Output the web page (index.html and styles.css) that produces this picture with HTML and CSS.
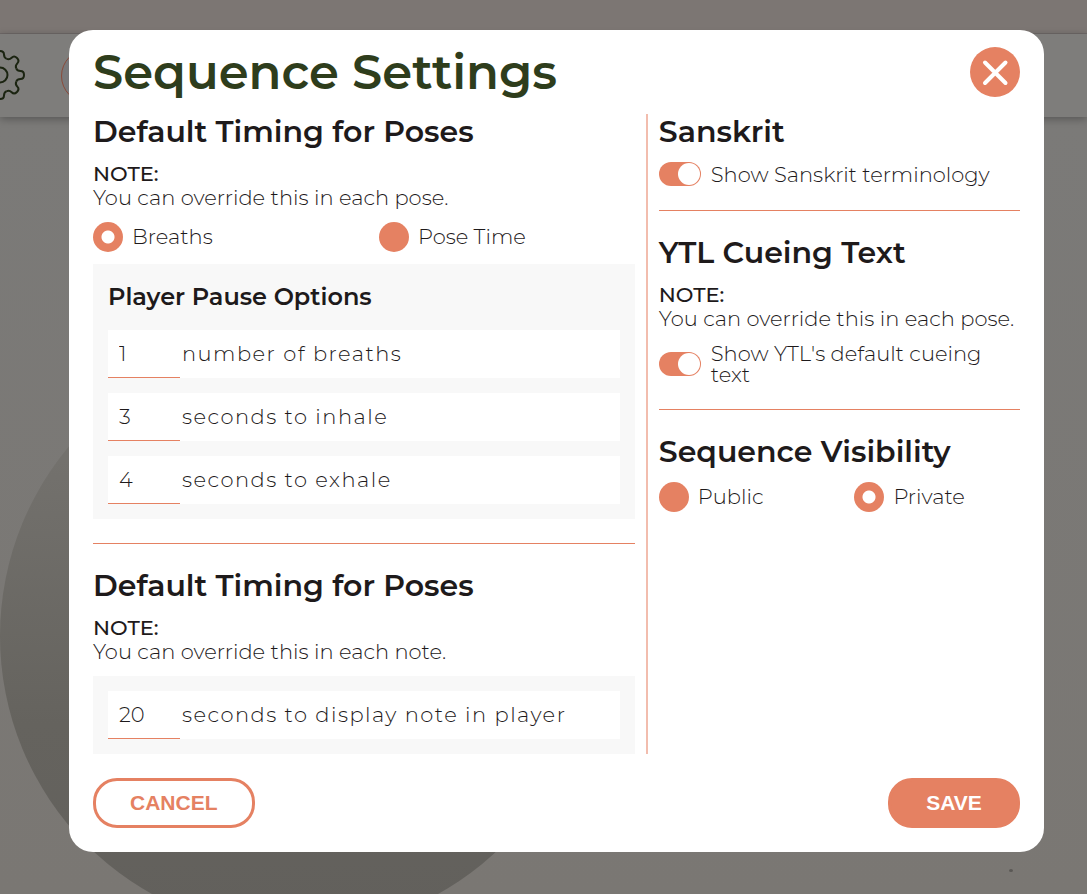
FILE: index.html
```html
<!DOCTYPE html>
<html lang="en">
<head>
<meta charset="utf-8">
<meta name="viewport" content="width=device-width, initial-scale=1">
<title>Sequence Settings</title>
<link rel="stylesheet" href="styles.css">
</head>
<body>
<div class="page" aria-hidden="true">
  <div class="topbar"></div>
  <div class="toolbar">
    <svg class="gear" viewBox="-25 -25 52 52" fill="none">
      <defs><path id="tooth" d="M16.2-6.7C17-4.8 18.5-4 20.5-4 23-4 24-3 24 0 24 3 23 4 20.5 4 18.5 4 17 4.8 16.2 6.7"/></defs>
      <use href="#tooth"/><use href="#tooth" transform="rotate(45)"/><use href="#tooth" transform="rotate(90)"/><use href="#tooth" transform="rotate(135)"/><use href="#tooth" transform="rotate(180)"/><use href="#tooth" transform="rotate(225)"/><use href="#tooth" transform="rotate(270)"/><use href="#tooth" transform="rotate(315)"/>
      <circle r="7.5"/>
    </svg>
    <span class="round"></span>
  </div>
  <div class="canvas">
    <span class="disc"></span>
    <span class="speck"></span>
  </div>
</div>

<div class="overlay">
  <form class="dialog" role="dialog" aria-labelledby="title">
    <header class="dialog-head">
      <h1 id="title">Sequence Settings</h1>
      <button class="close" type="button" aria-label="Close">
        <svg viewBox="0 0 50 50"><path d="M15 15.500L35.500 36M35.500 15.500L15 36"/></svg>
      </button>
    </header>

    <div class="columns">
      <div class="column">
        <section class="block">
          <h2>Default Timing for Poses</h2>
          <p class="note"><strong>NOTE:</strong><br>You can override this in each pose.</p>
          <div class="choices">
            <label class="choice"><input class="radio" type="radio" name="timing" checked>Breaths</label>
            <label class="choice"><input class="radio" type="radio" name="timing">Pose Time</label>
          </div>
          <div class="panel">
            <h3>Player Pause Options</h3>
            <label class="field"><input class="number" type="text" inputmode="numeric" value="1">number of breaths</label>
            <label class="field"><input class="number" type="text" inputmode="numeric" value="3">seconds to inhale</label>
            <label class="field"><input class="number" type="text" inputmode="numeric" value="4">seconds to exhale</label>
          </div>
        </section>
        <hr>
        <section class="block">
          <h2>Default Timing for Poses</h2>
          <p class="note"><strong>NOTE:</strong><br>You can override this in each note.</p>
          <div class="panel">
            <label class="field"><input class="number" type="text" inputmode="numeric" value="20">seconds to display note in player</label>
          </div>
        </section>
      </div>

      <div class="divider"></div>

      <div class="column">
        <section class="block">
          <h2>Sanskrit</h2>
          <label class="switch"><input class="toggle" type="checkbox" role="switch" checked>Show Sanskrit terminology</label>
        </section>
        <hr>
        <section class="block">
          <h2>YTL Cueing Text</h2>
          <p class="note"><strong>NOTE:</strong><br>You can override this in each pose.</p>
          <label class="switch"><input class="toggle" type="checkbox" role="switch" checked>Show YTL's default cueing text</label>
        </section>
        <hr>
        <section class="block">
          <h2>Sequence Visibility</h2>
          <div class="choices">
            <label class="choice"><input class="radio" type="radio" name="visibility">Public</label>
            <label class="choice"><input class="radio" type="radio" name="visibility" checked>Private</label>
          </div>
        </section>
      </div>
    </div>

    <footer class="actions">
      <button class="btn btn-outline" type="button">CANCEL</button>
      <button class="btn btn-solid" type="submit">SAVE</button>
    </footer>
  </form>
</div>
</body>
</html>
```

FILE: styles.css
```css
:root {
  --coral: #e58162;
  --ink: #1e1a1b;
}

* { box-sizing: border-box; }

body {
  margin: 0;
  color: var(--ink);
  font-family: Montserrat, Inter, sans-serif;
  font-size: 21px;
  font-weight: 300;
  line-height: 24px;
}

/* Dimmed page behind the dialog */
.page {
  display: flex;
  flex-direction: column;
  min-height: 100vh;
  background: #7a7874;
}
.topbar {
  height: 34px;
  background: #7c7673;
  border-bottom: 1px solid #6f6968;
}
.toolbar {
  display: flex;
  align-items: center;
  gap: 34px;
  height: 83px;
  background: #7e7d7b;
  box-shadow: 0 2px 8px rgba(0, 0, 0, 0.3);
  z-index: 1;
}
.gear {
  width: 52px;
  height: 52px;
  flex: none;
  margin-left: -25px;
  stroke: #1b2411;
  stroke-width: 2;
}
.round {
  width: 54px;
  height: 54px;
  border: 1px solid #8a4a3a;
  border-radius: 50%;
  background: #79797b;
}
.canvas {
  position: relative;
  flex: 1;
  overflow: hidden;
  background: linear-gradient(#7b7a78, #7a7773);
}
.disc {
  position: absolute;
  left: 0;
  top: 224px;
  width: 590px;
  height: 590px;
  border-radius: 50%;
  background: linear-gradient(#73716d 20%, #65635e 65%, #62605c);
}
.speck {
  position: absolute;
  right: 74px;
  top: 752px;
  width: 4px;
  height: 3px;
  border-radius: 50%;
  background: #5a5855;
}

/* Dialog */
.overlay {
  position: absolute;
  top: 0;
  left: 0;
  width: 100%;
  padding: 30px 43px 42px 69px;
  z-index: 2;
}
.dialog {
  padding: 0 24px 24px;
  border-radius: 24px;
  background: #fff;
}
.dialog-head {
  display: flex;
  align-items: center;
  justify-content: space-between;
  height: 84px;
}
h1, h2, h3, p { margin: 0; }
h1 {
  color: #2e3d1c;
  font-size: 48px;
  font-weight: 600;
  line-height: 60px;
}
h2 {
  font-size: 30px;
  font-weight: 600;
  line-height: 36px;
}
h3 {
  font-size: 24px;
  font-weight: 600;
  line-height: 36px;
}
hr {
  width: 100%;
  height: 1px;
  margin: 24px 0;
  border: 0;
  background: var(--coral);
}
.close {
  width: 50px;
  height: 50px;
  padding: 0;
  border: 0;
  border-radius: 50%;
  background: var(--coral);
}
.close svg {
  display: block;
  fill: none;
  stroke: #fff;
  stroke-width: 4;
  stroke-linecap: round;
}

.columns {
  display: grid;
  grid-template-columns: 3fr 2px 2fr;
  gap: 11px;
}
.divider { background: #f2bdae; }
.block {
  display: flex;
  flex-direction: column;
  gap: 12px;
}
.note strong { font-weight: 500; }

.choices {
  display: grid;
  grid-template-columns: 1fr 1fr;
  gap: 30px;
}
.choice, .switch {
  display: flex;
  align-items: center;
}
.choice {
  gap: 9px;
  line-height: 20px;
}
.switch {
  gap: 10px;
  line-height: 21px;
}
.radio, .toggle {
  appearance: none;
  flex: none;
  margin: 0;
  background: var(--coral);
}
.radio {
  width: 30px;
  height: 30px;
  border-radius: 50%;
}
.radio:checked {
  background: radial-gradient(circle, #fff 0 6px, var(--coral) 7px);
}
.toggle {
  width: 42px;
  height: 24px;
  padding: 1px;
  border-radius: 12px;
}
.toggle::before {
  content: "";
  display: block;
  width: 22px;
  height: 22px;
  border-radius: 50%;
  background: #fff;
}
.toggle:checked::before { margin-left: auto; }

.panel {
  display: flex;
  flex-direction: column;
  gap: 15px;
  padding: 15px;
  background: #f8f8f8;
}
.field {
  display: flex;
  align-items: center;
  gap: 2px;
  background: #fff;
  letter-spacing: 0.07em;
}
.number {
  width: 72px;
  height: 48px;
  padding: 0 11px;
  border: 0;
  border-bottom: 1px solid var(--coral);
  background: transparent;
  color: inherit;
  font: inherit;
}

.actions {
  display: flex;
  justify-content: space-between;
  margin-top: 24px;
}
.btn {
  min-width: 132px;
  height: 50px;
  padding: 0 34px;
  border: 3px solid var(--coral);
  border-radius: 24px;
  font-family: "Liberation Sans", Arial, sans-serif;
  font-size: 21px;
  font-weight: 700;
}
.btn-outline {
  background: #fff;
  color: var(--coral);
}
.btn-solid {
  background: var(--coral);
  color: #fff;
}
```
